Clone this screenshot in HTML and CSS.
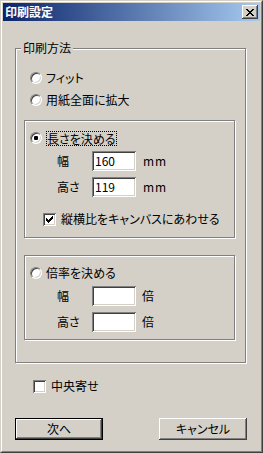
FILE: index.html
```html
<!DOCTYPE html>
<html lang="ja">
<head>
<meta charset="utf-8">
<title>印刷設定</title>
<link rel="stylesheet" href="styles.css">
</head>
<body>
<div class="window">
  <div class="frame">
    <div class="titlebar">
      <span class="title">印刷設定</span>
      <button class="close" aria-label="閉じる">
        <svg width="8" height="7" viewBox="0 0 8 7" shape-rendering="crispEdges">
          <path d="M0 0h2v1H0zM6 0h2v1H6zM1 1h2v1H1zM5 1h2v1H5zM2 2h4v1H2zM3 3h2v1H3zM2 4h4v1H2zM1 5h2v1H1zM5 5h2v1H5zM0 6h2v1H0zM6 6h2v1H6z" fill="#000"/>
        </svg>
      </button>
    </div>
    <div class="client">
      <div class="group outer">
        <div class="legend">印刷方法</div>
        <div class="opt first"><span class="radio"></span><span>フィット</span></div>
        <div class="opt second"><span class="radio"></span><span>用紙全面に拡大</span></div>

        <div class="group sub sub1">
          <div class="opt"><span class="radio checked"></span><span class="focus">長さを決める</span></div>
          <div class="field f1"><span class="flabel">幅</span><span class="edit">160</span><span class="unit mm">mm</span></div>
          <div class="field f2"><span class="flabel">高さ</span><span class="edit">119</span><span class="unit mm">mm</span></div>
          <div class="chkrow inner"><span class="chk">
            <svg width="7" height="7" viewBox="0 0 7 7" shape-rendering="crispEdges"><path d="M6 0h1v1H6zM5 1h2v1H5zM0 2h1v1H0zM4 2h3v1H4zM0 3h2v1H0zM3 3h3v1H3zM0 4h5v1H0zM1 5h3v1H1zM2 6h1v1H2z" fill="#000"/></svg>
          </span><span>縦横比をキャンバスにあわせる</span></div>
        </div>

        <div class="group sub sub2">
          <div class="opt"><span class="radio"></span><span>倍率を決める</span></div>
          <div class="field f1"><span class="flabel">幅</span><span class="edit"></span><span class="unit">倍</span></div>
          <div class="field f2"><span class="flabel">高さ</span><span class="edit"></span><span class="unit">倍</span></div>
        </div>
      </div>

      <div class="chkrow center"><span class="chk"></span><span>中央寄せ</span></div>

      <div class="buttons">
        <button class="btn default">次へ</button>
        <button class="btn">キャンセル</button>
      </div>
    </div>
  </div>
</div>
</body>
</html>
```

FILE: styles.css
```css
* { box-sizing: border-box; }
html, body { margin: 0; padding: 0; }
body {
  width: 263px;
  height: 453px;
  background: #d4d0c8;
  color: #000;
  font-family: "Noto Sans CJK JP", "Noto Sans", sans-serif;
  font-size: 12px;
  line-height: 16px;
  font-feature-settings: "palt";
}
.window {
  width: 263px;
  height: 453px;
  border: 1px solid;
  border-color: #d4d0c8 #404040 #404040 #d4d0c8;
  background: #d4d0c8;
}
.frame {
  height: 100%;
  border: 1px solid;
  border-color: #fff #808080 #808080 #fff;
  padding: 1px;
  display: flex;
  flex-direction: column;
}
.titlebar {
  flex: none;
  height: 18px;
  display: flex;
  align-items: center;
  justify-content: space-between;
  padding: 0 2px;
  background: linear-gradient(to right, #0a246a, #a6caf0);
}
.title {
  color: #fff;
  font-weight: bold;
}
.close {
  width: 16px;
  height: 14px;
  padding: 0 1px 0 0;
  border: 0;
  background: #d4d0c8;
  box-shadow: inset -1px -1px #404040, inset 1px 1px #fff, inset -2px -2px #808080;
  display: flex;
  align-items: center;
  justify-content: center;
}
.close svg { display: block; }

.client {
  flex: 1;
  padding: 27px 0 0 12px;
  display: flex;
  flex-direction: column;
  align-items: flex-start;
}
.group {
  flex: none;
  border: 1px solid #808080;
  box-shadow: inset 1px 1px #fff, 1px 1px #fff;
  display: flex;
  flex-direction: column;
  align-items: flex-start;
}
.outer {
  width: 231px;
  height: 315px;
  padding-left: 8px;
}
.legend {
  margin: -9px 0 0 -3px;
  padding: 0 2px;
  background: #d4d0c8;
}
.opt {
  display: flex;
  align-items: center;
  gap: 4px;
  height: 16px;
  white-space: nowrap;
}
.outer > .opt { margin-left: 6px; }
.outer > .first { margin-top: 14px; }
.outer > .second { margin-top: 6px; }

.radio {
  flex: none;
  width: 12px;
  height: 12px;
  border-radius: 50%;
  background: #fff;
  border: 1px solid;
  border-color: #808080 #fff #fff #808080;
  box-shadow: inset 1px 1px #404040, inset -1px -1px #d4d0c8;
  display: flex;
  align-items: center;
  justify-content: center;
}
.radio.checked::after {
  content: "";
  width: 4px;
  height: 4px;
  border-radius: 1px;
  background: #000;
}
.focus {
  height: 15px;
  line-height: 13px;
  border: 1px dotted #000;
  padding: 0 1px 0 0;
}

.sub {
  width: 211px;
  padding-left: 5px;
}
.sub1 { height: 118px; margin-top: 12px; }
.sub2 { height: 85px; margin-top: 17px; }
.sub > .opt { margin-top: 9px; }

.field {
  display: flex;
  align-items: center;
  height: 20px;
  margin-left: 27px;
}
.field.f1 { margin-top: 5px; }
.field.f2 { margin-top: 6px; }
.flabel { width: 35px; }
.edit {
  width: 44px;
  height: 20px;
  padding-left: 3px;
  background: #fff;
  box-shadow: inset 1px 1px #808080, inset -1px -1px #fff, inset 2px 2px #404040, inset -2px -2px #d4d0c8;
  display: flex;
  align-items: center;
}
.unit { margin-left: 6px; }
.unit.mm { margin-left: 7px; letter-spacing: 1px; }

.chkrow {
  display: flex;
  align-items: center;
  gap: 5px;
  height: 16px;
  white-space: nowrap;
}
.chkrow.inner { margin: 14px 0 0 13px; }
.chkrow.center { margin: 15px 0 0 18px; }
.chk {
  flex: none;
  width: 13px;
  height: 13px;
  background: #fff;
  box-shadow: inset 1px 1px #808080, inset -1px -1px #fff, inset 2px 2px #404040, inset -2px -2px #d4d0c8;
  display: flex;
  padding: 3px;
}
.chk svg { display: block; }

.buttons {
  display: flex;
  gap: 56px;
  margin-top: 24px;
}
.btn {
  width: 88px;
  height: 22px;
  padding: 0;
  border: 0;
  background: #d4d0c8;
  font: inherit;
  color: #000;
  display: flex;
  align-items: center;
  justify-content: center;
  box-shadow: inset -1px -1px #404040, inset 1px 1px #fff, inset -2px -2px #808080;
}
.btn.default {
  border: 1px solid #000;
}
```
